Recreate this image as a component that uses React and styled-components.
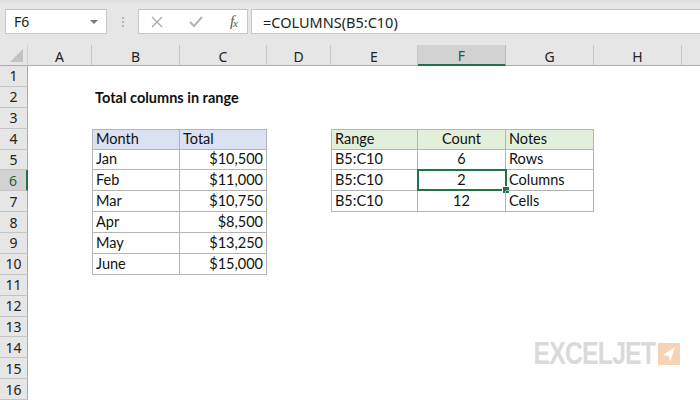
import React from 'react';
import styled, { createGlobalStyle } from 'styled-components';

const GlobalStyle = createGlobalStyle`
  html, body {
    margin: 0;
    padding: 0;
    background: #ffffff;
    overflow: hidden;
  }
`;

const COLS = ['A', 'B', 'C', 'D', 'E', 'F', 'G', 'H', 'I'];
const ROW_COUNT = 16;
const GRID_LINE = '#b4b4b4';
const HEADER_LINE = '#ababab';
const EXCEL_GREEN = '#217346';

// table ranges, colIndex 0 = A
const tables = [
  {
    top: 4, bottom: 10, left: 1, right: 2, fill: '#d9e1f2',
    rows: [
      ['Month', 'Total'],
      ['Jan', '$10,500'],
      ['Feb', '$11,000'],
      ['Mar', '$10,750'],
      ['Apr', '$8,500'],
      ['May', '$13,250'],
      ['June', '$15,000'],
    ],
    align: (r, c) => (r > 0 && c === 1 ? 'right' : 'left'),
  },
  {
    top: 4, bottom: 7, left: 4, right: 6, fill: '#e2efda',
    rows: [
      ['Range', 'Count', 'Notes'],
      ['B5:C10', '6', 'Rows'],
      ['B5:C10', '2', 'Columns'],
      ['B5:C10', '12', 'Cells'],
    ],
    align: (r, c) => (c === 1 ? 'center' : 'left'),
  },
];

const Window = styled.div`
  width: 700px;
  height: 400px;
  overflow: hidden;
  display: flex;
  flex-direction: column;
  background: #ffffff;
`;

const FormulaBar = styled.div`
  height: 45px;
  flex: none;
  display: flex;
  align-items: flex-start;
  padding: 9px 0 0 5px;
  box-sizing: border-box;
  background: linear-gradient(#dcdcdc 0, #e6e6e6 4px);
`;

const InputBox = styled.div`
  height: 25px;
  box-sizing: border-box;
  background: #ffffff;
  border: 1px solid #c6c6c6;
  display: flex;
  align-items: center;
  font-family: 'Noto Sans', 'Open Sans', sans-serif;
  font-size: 14px;
  color: #222;
`;

const NameBox = styled(InputBox)`
  width: 102px;
  padding: 0 8px 0 8px;
  justify-content: space-between;
`;

const DropArrow = styled.span`
  width: 0;
  height: 0;
  border-left: 4px solid transparent;
  border-right: 4px solid transparent;
  border-top: 4px solid #7a7a7a;
`;

const Grip = styled.div`
  width: 31px;
  display: flex;
  flex-direction: column;
  align-items: center;
  gap: 2px;
  padding-top: 8px;

  span {
    width: 2px;
    height: 2px;
    background: #b5b5b5;
  }
`;

const FxBox = styled(InputBox)`
  width: 110px;
  padding: 0 10px 0 12px;
  justify-content: space-between;
`;

const FxLabel = styled.span`
  font-family: 'Liberation Serif', serif;
  font-style: italic;
  font-size: 15px;
  color: #555;
  letter-spacing: -1px;

  sub {
    font-size: 11px;
    vertical-align: -1px;
  }
`;

const FormulaInput = styled(InputBox)`
  flex: 1;
  margin-left: 3px;
  border-right: none;
  padding-left: 11px;
  font-size: 14.5px;
`;

const Sheet = styled.div`
  display: grid;
  grid-template-columns: 28px 64px 88px 87px 64px 87px 88px 88px 88px 88px;
  grid-template-rows: 21px repeat(${ROW_COUNT}, 20.875px);
  flex: none;
`;

const Corner = styled.div`
  position: relative;
  background: #e6e6e6;
  border-bottom: 1px solid ${HEADER_LINE};
  border-right: 1px solid #d0d0d0;
  box-sizing: border-box;

  &::after {
    content: '';
    position: absolute;
    right: 4px;
    bottom: 3px;
    border-left: 13px solid transparent;
    border-bottom: 13px solid #c2c2c2;
  }
`;

const ColHeader = styled.div`
  background: ${(p) => (p.$active ? '#d2d2d2' : '#e6e6e6')};
  border-right: 1px solid ${(p) => (p.$active ? '#bcbcbc' : '#c6c6c6')};
  border-bottom: ${(p) => (p.$active ? `2px solid ${EXCEL_GREEN}` : `1px solid ${HEADER_LINE}`)};
  box-sizing: border-box;
  display: flex;
  align-items: center;
  justify-content: center;
  padding-top: 2px;
  font-family: 'Noto Sans', 'Open Sans', sans-serif;
  font-size: 14px;
  color: ${(p) => (p.$active ? '#1d5e38' : '#222')};
`;

const RowHeader = styled.div`
  background: ${(p) => (p.$active ? '#d2d2d2' : '#e6e6e6')};
  border-bottom: 1px solid #c4c4c4;
  border-right: ${(p) => (p.$active ? `2px solid ${EXCEL_GREEN}` : `1px solid ${HEADER_LINE}`)};
  box-sizing: border-box;
  display: flex;
  align-items: center;
  justify-content: center;
  font-family: 'Noto Sans', 'Open Sans', sans-serif;
  font-size: 14px;
  color: ${(p) => (p.$active ? '#1d5e38' : '#222')};
`;

const Cell = styled.div`
  position: relative;
  box-sizing: border-box;
  display: flex;
  align-items: flex-end;
  justify-content: ${(p) =>
    p.$align === 'right' ? 'flex-end' : p.$align === 'center' ? 'center' : 'flex-start'};
  padding: 0 3px 2px 3px;
  white-space: nowrap;
  overflow: visible;
  z-index: ${(p) => (p.$overflow ? 2 : 'auto')};
  background: ${(p) => p.$fill || 'transparent'};
  border-right: ${(p) => (p.$boxed ? `1px solid ${GRID_LINE}` : 'none')};
  border-bottom: ${(p) => (p.$boxed ? `1px solid ${GRID_LINE}` : 'none')};
  border-top: ${(p) => (p.$edgeTop ? `1px solid ${GRID_LINE}` : 'none')};
  border-left: ${(p) => (p.$edgeLeft ? `1px solid ${GRID_LINE}` : 'none')};
  font-family: 'Lato', 'Liberation Sans', sans-serif;
  font-size: 14.5px;
  font-weight: ${(p) => (p.$bold ? 700 : 400)};
  line-height: 17px;
  color: #111;
`;

const Selection = styled.div`
  position: absolute;
  left: -1px;
  top: -1px;
  right: -2px;
  bottom: -1px;
  border: 2px solid ${EXCEL_GREEN};
  pointer-events: none;

  &::after {
    content: '';
    position: absolute;
    right: -5px;
    bottom: -5px;
    width: 6px;
    height: 6px;
    background: ${EXCEL_GREEN};
    border: 1px solid #ffffff;
  }
`;

const Logo = styled.div`
  position: absolute;
  right: 20px;
  bottom: 28px;
  display: flex;
  align-items: center;
  gap: 3px;
`;

const LogoWord = styled.span`
  font-family: 'Liberation Sans', Arial, sans-serif;
  font-weight: 700;
  font-size: 31px;
  letter-spacing: -1px;
  color: #dadada;
  display: inline-block;
  transform: scaleX(0.8);
  transform-origin: right center;
  margin-left: -30px;
`;

const Stage = styled.div`
  position: relative;
  flex: 1;
`;

function XIcon() {
  return (
    <svg width="12" height="12" viewBox="0 0 12 12">
      <path d="M1 1 L11 11 M11 1 L1 11" stroke="#a8a8a8" strokeWidth="1.3" fill="none" />
    </svg>
  );
}

function CheckIcon() {
  return (
    <svg width="14" height="12" viewBox="0 0 14 12">
      <path d="M1 6 L5 10 L13 1" stroke="#b4b4b4" strokeWidth="2" fill="none" />
    </svg>
  );
}

function LogoMark() {
  return (
    <svg width="22" height="22" viewBox="0 0 22 22">
      <rect width="22" height="22" fill="#f8d2b4" />
      <path d="M17 4 L5 12 L11 13 L12 19 Z" fill="#ffffff" />
    </svg>
  );
}

function cellInfo(row, col) {
  for (const t of tables) {
    if (row >= t.top && row <= t.bottom && col >= t.left && col <= t.right) {
      const r = row - t.top;
      const c = col - t.left;
      return {
        text: t.rows[r][c],
        boxed: true,
        edgeTop: row === t.top,
        edgeLeft: col === t.left,
        fill: r === 0 ? t.fill : null,
        align: t.align(r, c),
      };
    }
  }
  if (row === 2 && col === 1) {
    return { text: 'Total columns in range', bold: true, overflow: true };
  }
  return {};
}

export default function App() {
  const activeRow = 6;
  const activeCol = 5;
  const rows = Array.from({ length: ROW_COUNT }, (_, i) => i + 1);

  return (
    <Window>
      <GlobalStyle />
      <FormulaBar>
        <NameBox>
          <span>F6</span>
          <DropArrow />
        </NameBox>
        <Grip>
          <span />
          <span />
          <span />
        </Grip>
        <FxBox>
          <XIcon />
          <CheckIcon />
          <FxLabel>
            f<sub>x</sub>
          </FxLabel>
        </FxBox>
        <FormulaInput>=COLUMNS(B5:C10)</FormulaInput>
      </FormulaBar>

      <Stage>
        <Sheet>
          <Corner />
          {COLS.map((c, i) => (
            <ColHeader key={c} $active={i === activeCol}>
              {c}
            </ColHeader>
          ))}
          {rows.map((row) => (
            <React.Fragment key={row}>
              <RowHeader $active={row === activeRow}>{row}</RowHeader>
              {COLS.map((_, col) => {
                const info = cellInfo(row, col);
                return (
                  <Cell
                    key={col}
                    $boxed={info.boxed}
                    $edgeTop={info.edgeTop}
                    $edgeLeft={info.edgeLeft}
                    $fill={info.fill}
                    $align={info.align}
                    $bold={info.bold}
                    $overflow={info.overflow}
                  >
                    {info.text}
                    {row === activeRow && col === activeCol && <Selection />}
                  </Cell>
                );
              })}
            </React.Fragment>
          ))}
        </Sheet>
        <Logo>
          <LogoWord>EXCELJET</LogoWord>
          <LogoMark />
        </Logo>
      </Stage>
    </Window>
  );
}
